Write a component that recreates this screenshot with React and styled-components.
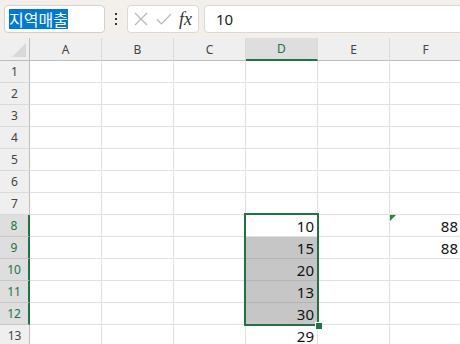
import React from "react";
import styled, { createGlobalStyle } from "styled-components";

const GlobalStyle = createGlobalStyle`
  html, body {
    margin: 0;
    padding: 0;
    background: #ffffff;
    overflow: hidden;
  }
  body {
    font-family: "Noto Sans", "Noto Sans CJK KR", sans-serif;
  }
`;

const COLS = ["A", "B", "C", "D", "E", "F"];
const ROWS = [1, 2, 3, 4, 5, 6, 7, 8, 9, 10, 11, 12, 13];
const DATA = {
  8: { D: "10", F: "88" },
  9: { D: "15", F: "88" },
  10: { D: "20" },
  11: { D: "13" },
  12: { D: "30" },
  13: { D: "29" },
};
const SEL_COL = "D";
const SEL_FROM = 8;
const SEL_TO = 12;
const GREEN = "#217346";

const App = () => {
  return (
    <>
      <GlobalStyle />
      <Page>
        <TopBar>
          <NameBox>
            <Picked>지역매출</Picked>
          </NameBox>
          <Dots>
            <svg width="4" height="12" viewBox="0 0 4 12">
              <rect x="1" y="0" width="2" height="2" fill="#333" />
              <rect x="1" y="5" width="2" height="2" fill="#333" />
              <rect x="1" y="10" width="2" height="2" fill="#333" />
            </svg>
          </Dots>
          <FxBox>
            <svg width="14" height="14" viewBox="0 0 14 14">
              <path d="M1 1 L13 13 M13 1 L1 13" stroke="#b8b8b8" strokeWidth="1.2" fill="none" />
            </svg>
            <svg width="16" height="12" viewBox="0 0 16 12">
              <path d="M1 6.5 L5.5 11 L15 1" stroke="#b8b8b8" strokeWidth="1.2" fill="none" />
            </svg>
            <Fx>fx</Fx>
          </FxBox>
          <FormulaInput>10</FormulaInput>
        </TopBar>
        <Sheet>
          <Corner>
            <svg width="14" height="14" viewBox="0 0 14 14">
              <path d="M14 0 L14 14 L0 14 Z" fill="#d8d8d8" />
            </svg>
          </Corner>
          {COLS.map((c) => (
            <ColHead key={c} $active={c === SEL_COL}>
              {c}
            </ColHead>
          ))}
          {ROWS.map((r) => {
            const inSel = r >= SEL_FROM && r <= SEL_TO;
            return (
              <React.Fragment key={r}>
                <RowHead $active={inSel}>{r}</RowHead>
                {COLS.map((c) => (
                  <Cell
                    key={c}
                    $shaded={c === SEL_COL && inSel && r !== SEL_FROM}
                  >
                    {r === 8 && c === "F" && <ErrorMark />}
                    {DATA[r] && DATA[r][c]}
                  </Cell>
                ))}
              </React.Fragment>
            );
          })}
          <Selection>
            <Handle />
          </Selection>
        </Sheet>
      </Page>
    </>
  );
};

export default App;

const Page = styled.div`
  width: 460px;
  height: 344px;
  overflow: hidden;
`;

const TopBar = styled.div`
  display: flex;
  align-items: center;
  height: 38px;
  padding-left: 4px;
  box-sizing: border-box;
  background: #f3efeb;
`;

const NameBox = styled.div`
  display: flex;
  align-items: center;
  width: 101px;
  height: 28px;
  box-sizing: border-box;
  padding-left: 4px;
  background: #ffffff;
  border: 1px solid #d4d0cc;
  border-radius: 4px;
`;

const Picked = styled.span`
  background: #0078d4;
  color: #ffffff;
  font-size: 16px;
  line-height: 20px;
  font-family: "Noto Sans CJK KR", "Noto Sans", sans-serif;
`;

const Dots = styled.div`
  display: flex;
  align-items: center;
  justify-content: center;
  width: 22px;
  height: 28px;
`;

const FxBox = styled.div`
  display: flex;
  align-items: center;
  justify-content: space-between;
  width: 72px;
  height: 28px;
  box-sizing: border-box;
  padding: 0 6px 0 6px;
  background: #ffffff;
  border: 1px solid #dcd8d4;
  border-radius: 4px;
`;

const Fx = styled.span`
  font-family: "Liberation Serif", serif;
  font-style: italic;
  font-size: 18px;
  color: #333333;
  line-height: 20px;
`;

const FormulaInput = styled.div`
  display: flex;
  align-items: center;
  flex: 1;
  height: 28px;
  margin-left: 5px;
  margin-right: -12px;
  box-sizing: border-box;
  padding-left: 11px;
  background: #ffffff;
  border: 1px solid #dcd8d4;
  border-radius: 4px;
  font-size: 15px;
  color: #222222;
`;

const Sheet = styled.div`
  position: relative;
  display: grid;
  grid-template-columns: 30px repeat(6, 72px);
  grid-template-rows: 23px;
  grid-auto-rows: 22px;
`;

const HeadBase = styled.div`
  display: flex;
  align-items: center;
  justify-content: center;
  box-sizing: border-box;
  font-size: 12px;
  background: #efefef;
  color: #444444;
`;

const Corner = styled(HeadBase)`
  justify-content: flex-end;
  align-items: flex-end;
  padding: 0 3px 3px 0;
  border-right: 1px solid #bdbdbd;
  border-bottom: 1px solid #bdbdbd;
`;

const ColHead = styled(HeadBase)`
  border-right: 1px solid #dadada;
  border-bottom: ${(p) => (p.$active ? `2px solid ${GREEN}` : "1px solid #bdbdbd")};
  background: ${(p) => (p.$active ? "#dedede" : "#efefef")};
  color: ${(p) => (p.$active ? GREEN : "#444444")};
`;

const RowHead = styled(HeadBase)`
  border-right: ${(p) => (p.$active ? `2px solid ${GREEN}` : "1px solid #bdbdbd")};
  border-bottom: 1px solid ${(p) => (p.$active ? "#c8c8c8" : "#dadada")};
  background: ${(p) => (p.$active ? "#dedede" : "#efefef")};
  color: ${(p) => (p.$active ? GREEN : "#444444")};
`;

const Cell = styled.div`
  position: relative;
  display: flex;
  align-items: center;
  justify-content: flex-end;
  box-sizing: border-box;
  padding-right: 3px;
  border-right: 1px solid #e1e1e1;
  border-bottom: 1px solid ${(p) => (p.$shaded ? "#b4b4b4" : "#e1e1e1")};
  background: ${(p) => (p.$shaded ? "#c6c6c6" : "#ffffff")};
  font-size: 15px;
  color: #111111;
`;

const ErrorMark = styled.span`
  position: absolute;
  top: 0;
  left: 0;
  width: 0;
  height: 0;
  border-top: 6px solid #1e8a34;
  border-right: 6px solid transparent;
`;

const Selection = styled.div`
  position: absolute;
  left: 244px;
  top: 175px;
  width: 75px;
  height: 113px;
  box-sizing: border-box;
  border: 2px solid ${GREEN};
  pointer-events: none;
`;

const Handle = styled.span`
  position: absolute;
  right: -5px;
  bottom: -5px;
  width: 6px;
  height: 6px;
  background: ${GREEN};
  border-left: 1px solid #ffffff;
  border-top: 1px solid #ffffff;
`;
